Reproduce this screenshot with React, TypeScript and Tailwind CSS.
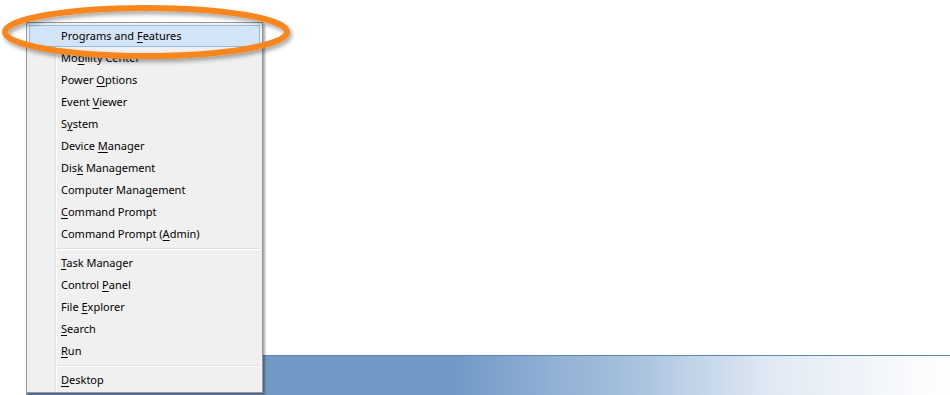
import React from 'react';

type Item = { before: string; key: string; after: string; active?: boolean };

const groups: Item[][] = [
  [
    { before: 'Programs and ', key: 'F', after: 'eatures', active: true },
    { before: 'Mo', key: 'b', after: 'ility Center' },
    { before: 'Power ', key: 'O', after: 'ptions' },
    { before: 'Event ', key: 'V', after: 'iewer' },
    { before: 'S', key: 'y', after: 'stem' },
    { before: 'Device ', key: 'M', after: 'anager' },
    { before: 'Dis', key: 'k', after: ' Management' },
    { before: 'Computer Mana', key: 'g', after: 'ement' },
    { before: '', key: 'C', after: 'ommand Prompt' },
    { before: 'Command Prompt (', key: 'A', after: 'dmin)' },
  ],
  [
    { before: '', key: 'T', after: 'ask Manager' },
    { before: 'Control ', key: 'P', after: 'anel' },
    { before: 'File ', key: 'E', after: 'xplorer' },
    { before: '', key: 'S', after: 'earch' },
    { before: '', key: 'R', after: 'un' },
  ],
  [{ before: '', key: 'D', after: 'esktop' }],
];

function MenuRow({ item }: { item: Item }) {
  return (
    <div
      className={
        'flex items-center h-[22px] pl-[31px] pb-[2px] border ' +
        (item.active ? 'bg-[#d3e4f6] border-[#8fbbe8]' : 'border-transparent')
      }
    >
      <span className="text-[11px] text-black leading-none whitespace-nowrap">
        {item.before}
        <span className="underline underline-offset-2 decoration-1">{item.key}</span>
        {item.after}
      </span>
    </div>
  );
}

function Separator() {
  return (
    <div className="h-[7px] flex items-center pl-[27px]">
      <div className="w-full h-[2px] border-t border-[#e0e0e0] border-b border-b-white" />
    </div>
  );
}

export default function App() {
  return (
    <div
      className="relative w-[950px] h-[395px] bg-white overflow-hidden"
      style={{ fontFamily: '"Noto Sans", "Open Sans", sans-serif' }}
    >
      <div className="pt-[355px] pl-[26px]">
        <div className="h-[40px] border-t border-[#5e86b6] bg-[linear-gradient(to_right,#7199c6_0%,#7199c6_46%,#a9c2df_66%,#dfe8f3_80%,#ffffff_100%)]" />
      </div>

      <div className="absolute left-[26px] top-[22px] w-[237px] h-[371px] bg-[#f0f0f0] border border-[#979797] shadow-[2px_2px_2px_rgba(0,0,0,0.35)] p-[2px]">
        <div className="absolute left-[28px] top-0 bottom-0 w-[2px] border-l border-[#e2e3e3] border-r border-r-white" />
        <div className="relative">
          {groups.map((g, gi) => (
            <div key={gi}>
              {gi > 0 && <Separator />}
              {g.map((item) => (
                <MenuRow key={item.before + item.key} item={item} />
              ))}
            </div>
          ))}
        </div>
      </div>

      <svg className="absolute inset-0 pointer-events-none" width="950" height="395">
        <defs>
          <filter id="sh" x="-10%" y="-50%" width="120%" height="200%">
            <feDropShadow dx="2" dy="3" stdDeviation="2" floodColor="#000" floodOpacity="0.35" />
          </filter>
        </defs>
        <ellipse
          cx="146"
          cy="32"
          rx="141"
          ry="24"
          fill="none"
          stroke="#f7861f"
          strokeWidth="6"
          filter="url(#sh)"
        />
      </svg>
    </div>
  );
}
